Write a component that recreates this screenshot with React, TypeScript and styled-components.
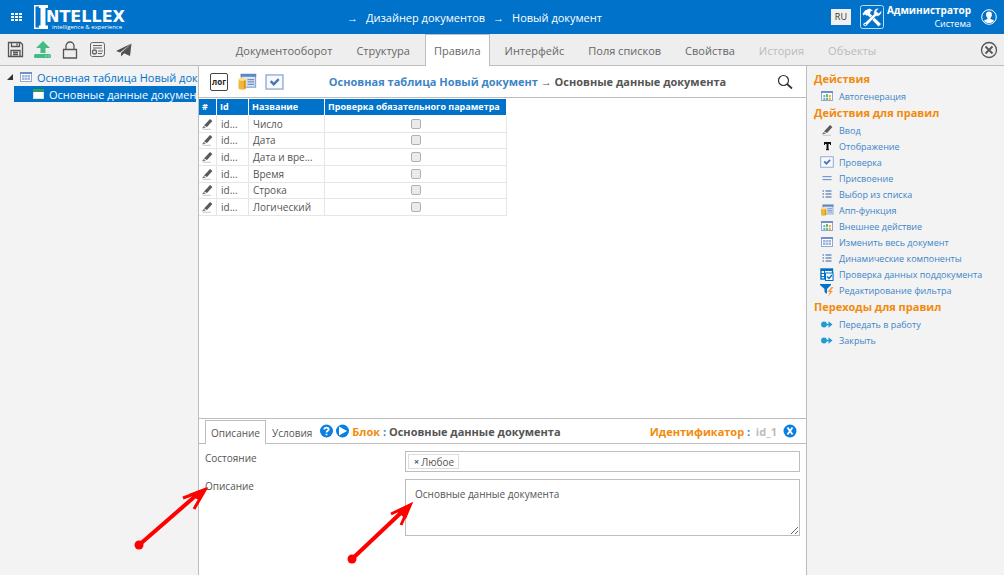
import React from 'react';
import styled, { createGlobalStyle, css } from 'styled-components';

const blue = '#0072c9';
const orange = '#f28a0c';
const link = '#3d85c6';
const line = '#bdbdbd';

const GlobalStyle = createGlobalStyle`
  * { box-sizing: border-box; }
  body { margin: 0; font-family: "Open Sans", "Noto Sans", sans-serif; font-size: 11px; color: #555; background: #fff; }
  button, input, textarea { font-family: inherit; }
  svg { display: block; flex: none; }
`;

const Page = styled.div`
  position: relative;
  display: flex;
  flex-direction: column;
  min-height: 100vh;
`;

const Header = styled.header`
  display: flex;
  align-items: center;
  height: 34px;
  padding: 0 7px 0 8px;
  background: ${blue};
  color: #fff;
`;

const IconButton = styled.button`
  display: flex;
  align-items: center;
  justify-content: center;
  padding: 0;
  border: 0;
  background: none;
  color: inherit;
  cursor: pointer;
`;

const Logo = styled.a`
  display: block;
  margin-left: 9px;
`;

const Crumbs = styled.nav`
  display: flex;
  flex: 1;
  justify-content: center;
  align-items: center;
  gap: 8px;
  padding-right: 9px;
  font-size: 11px;
  font-weight: 500;
  a { color: #fff; text-decoration: none; }
`;

const Lang = styled.button`
  width: 20px;
  height: 16px;
  padding: 0;
  border: 0;
  background: #f0f0f0;
  color: #333;
  font-size: 9px;
  line-height: 14px;
`;

const User = styled.div`
  min-width: 82px;
  margin: 0 10px 0 2px;
  text-align: right;
  font-size: 9px;
  line-height: 13px;
  white-space: nowrap;
  strong { display: block; font-size: 10px; }
`;

const Toolbar = styled.div`
  display: flex;
  height: 32px;
  padding: 0 6px 0 7px;
  background: #eee;
  border-bottom: 1px solid ${line};
`;

const Tools = styled.div`
  display: flex;
  align-items: center;
  gap: 9px;
  color: #555;
`;

const MainTabs = styled.nav`
  display: flex;
  flex: 1;
  justify-content: center;
  gap: 6px;
  margin-bottom: -1px;
`;

const MainTab = styled.button<{ $active?: boolean }>`
  padding: 0 8px;
  border: 1px solid transparent;
  border-bottom: 0;
  background: none;
  color: #666;
  font-size: 11px;
  white-space: nowrap;
  ${p => p.$active && css`background: #fff; border-color: ${line};`}
  &:disabled { color: #bbb; }
`;

const Body = styled.div`
  display: grid;
  grid-template-columns: 198px minmax(0, 1fr) 197px;
  flex: 1;
`;

const Tree = styled.aside`
  padding: 3px 2px 0 0;
  background: #f3f3f3;
`;

const TreeRow = styled.a<{ $selected?: boolean }>`
  display: flex;
  align-items: center;
  height: 16px;
  margin-bottom: 1px;
  padding-left: 5px;
  gap: 4px;
  white-space: nowrap;
  font-size: 11px;
  color: ${blue};
  text-decoration: none;
  ${p => p.$selected && css`margin-left: 14px; padding-left: 18px; background: ${blue}; color: #fff;`}
`;

const Center = styled.main`
  display: flex;
  flex-direction: column;
  background: #fff;
  border: solid ${line};
  border-width: 0 1px;
`;

const CenterBar = styled.div`
  display: flex;
  align-items: center;
  height: 32px;
  padding: 0 13px 0 10px;
  gap: 8px;
  border-bottom: 1px solid ${line};
`;

const Title = styled.h1`
  flex: 1;
  margin: 0;
  padding-right: 6px;
  text-align: center;
  font-size: 11px;
  font-weight: 700;
  a { color: ${link}; text-decoration: none; }
`;

const TableArea = styled.div`
  flex: 1;
  padding-top: 1px;
`;

const Grid = styled.table`
  table-layout: fixed;
  width: 308px;
  height: 117px;
  border-spacing: 0;
  font-size: 10px;
  line-height: 14px;
  th {
    height: 17px;
    padding: 0 3px;
    border-right: 1px solid #fff;
    border-bottom: 1px solid #fff;
    background: ${blue};
    color: #fff;
    font-size: 9px;
    font-weight: 700;
    text-align: left;
    white-space: nowrap;
  }
  td {
    height: 16px;
    padding: 0 4px;
    border-right: 1px solid #e6e6e6;
    border-bottom: 1px solid #e6e6e6;
    white-space: nowrap;
  }
  td:first-child { padding: 0 2px; }
`;

const Check = styled.input`
  display: block;
  appearance: none;
  width: 10px;
  height: 10px;
  margin: 0 auto;
  border: 1px solid #b0b0b0;
  border-radius: 2px;
  background: #ebebeb;
`;

const Details = styled.section`
  min-height: 157px;
  border-top: 1px solid ${line};
`;

const DetailsBar = styled.div`
  display: flex;
  align-items: center;
  height: 25px;
  padding: 0 9px 0 6px;
  border-bottom: 1px solid ${line};
`;

const SubTab = styled.button<{ $active?: boolean }>`
  align-self: flex-end;
  height: 24px;
  margin-bottom: -1px;
  padding: 0 5px;
  border: 1px solid transparent;
  border-bottom: 0;
  background: none;
  color: #555;
  font-size: 10px;
  ${p => p.$active && css`background: #fff; border-color: ${line};`}
`;

const BlockTitle = styled.h2`
  flex: 1;
  margin: 0 0 0 2px;
  font-size: 11px;
  font-weight: 700;
`;

const Ident = styled.div`
  margin-right: 6px;
  font-size: 11px;
  font-weight: 700;
  color: #bbb;
`;

const Key = styled.span`
  color: ${orange};
`;

const Colon = styled.span`
  color: #1c87dd;
`;

const Form = styled.div`
  display: grid;
  grid-template-columns: 200px minmax(0, 1fr);
  row-gap: 7px;
  padding: 7px 6px;
`;

const Label = styled.label`
  font-size: 10px;
  line-height: 14px;
`;

const TagBox = styled.div`
  display: flex;
  align-items: center;
  height: 21px;
  padding: 0 2px;
  border: 1px solid ${line};
  input { flex: 1; min-width: 0; border: 0; outline: 0; height: 14px; font-size: 10px; }
`;

const Tag = styled.span`
  display: flex;
  align-items: center;
  gap: 2px;
  height: 15px;
  padding: 0 4px 0 5px;
  border: 1px solid #ddd;
  font-size: 10px;
  button { font-size: 9px; font-weight: 700; }
`;

const Area = styled.textarea`
  display: block;
  width: 100%;
  height: 57px;
  padding: 7px 9px;
  border: 1px solid ${line};
  color: #555;
  font-size: 10px;
  line-height: 14px;
  outline: 0;
`;

const Actions = styled.aside`
  padding: 4px 0 0 7px;
  background: #f3f3f3;
`;

const ActionsHeading = styled.h3`
  margin: 0;
  font-size: 11px;
  line-height: 18px;
  font-weight: 700;
  color: ${orange};
`;

const Action = styled.a`
  display: flex;
  align-items: center;
  height: 16px;
  gap: 5px;
  padding-left: 6px;
  font-size: 9px;
  color: ${link};
  text-decoration: none;
  white-space: nowrap;
`;

const Notes = styled.svg`
  position: absolute;
  left: 130px;
  top: 480px;
  pointer-events: none;
`;

type IconProps = { size?: number };

const PencilIcon = ({ size = 12 }: IconProps) => (
  <svg width={size} height={size} viewBox="0 0 12 12">
    <path d="M9 1 11.400 3 6 9 3 7.500z" fill="#5a5a5a" />
    <path d="M2.600 8 5 9.600 1 10.600z" fill="#777" />
    <path d="M2 11.300h8" stroke="#c8c8c8" />
  </svg>
);

const WindowFrame = ({ children }: { children?: React.ReactNode }) => (
  <svg width="14" height="12" viewBox="0 0 14 12">
    <rect x="1.500" y="1.500" width="11" height="9" fill="#fff" stroke="#8fa9d3" />
    <path d="M1 2h12" stroke="#6f90c8" strokeWidth="2" />
    {children}
  </svg>
);

const SheetIcon = () => (
  <WindowFrame>
    <rect x="3" y="4" width="8" height="5" fill="#9fb5dc" />
    <path d="M3 6.500h8M5.700 4v5M8.300 4v5" stroke="#e6ecf7" strokeWidth="0.700" />
  </WindowFrame>
);

const AutoIcon = () => (
  <WindowFrame>
    <path d="M4.300 5v5" stroke="#5fb4e0" strokeWidth="2" />
    <path d="M7 4v6" stroke="#6dbb6d" strokeWidth="2" />
    <path d="M9.800 5v5" stroke="#efa83c" strokeWidth="2" />
    <path d="M3 7.500h8" stroke="#fff" strokeWidth="0.700" />
  </WindowFrame>
);

const AppIcon = ({ size = 12 }: IconProps) => (
  <svg width={Math.round(size * 7 / 6)} height={size} viewBox="0 0 20 18">
    <rect x="4" y="1.500" width="15" height="13.500" fill="#dde6f5" stroke="#8fa9d3" strokeWidth="1.400" />
    <path d="M3.300 2.500h16.400" stroke="#5f86c4" strokeWidth="3" />
    <path d="M10.500 7h7M10.500 9.500h7M10.500 12h7" stroke="#6f90c8" strokeWidth="1.300" />
    <path d="M1 6.500v9.500a3.500 1.500 0 0 0 8 0V6.500z" fill="#eeb83a" />
    <ellipse cx="5" cy="6.500" rx="4" ry="1.600" fill="#ffe08a" />
    <path d="M7.500 8v8.500" stroke="#d29612" strokeWidth="1.500" />
  </svg>
);

const CheckIcon = ({ size = 12 }: IconProps) => (
  <svg width={Math.round(size * 7 / 6)} height={size} viewBox="0 0 20 17">
    <rect x="1" y="1" width="18" height="15" fill="#f7f9fd" stroke="#8fa9d3" strokeWidth="1.400" />
    <path d="m6 7.500 3.200 3.400L14.500 5.500" fill="none" stroke="#4a74b8" strokeWidth="2.600" />
  </svg>
);

const LetterIcon = () => (
  <svg width="14" height="12" viewBox="0 0 14 12">
    <path d="M4 3h7M7.500 3v7" stroke="#111" strokeWidth="2" />
    <path d="M4.500 3v2M10.500 3v2M6 9.700h3" stroke="#111" />
  </svg>
);

const EqualIcon = () => (
  <svg width="14" height="12" viewBox="0 0 14 12">
    <path d="M2.500 4.500h9M2.500 7.500h9" stroke="#6f8fc6" />
    <path d="M2.500 5.300h9M2.500 8.300h9" stroke="#c3d0e8" strokeWidth="0.600" />
  </svg>
);

const ListIcon = () => (
  <svg width="14" height="12" viewBox="0 0 14 12">
    <path d="M2.500 3h1.500M2.500 6h1.500M2.500 9h1.500M5.500 3h6M5.500 6h6M5.500 9h6" stroke="#6f90c8" strokeWidth="1.500" />
  </svg>
);

const SubdocIcon = () => (
  <svg width="14" height="13" viewBox="0 0 14 13">
    <rect x="1" y="1" width="11.500" height="10" fill="#fff" stroke={blue} strokeWidth="1.400" />
    <path d="M1 2h12" stroke={blue} strokeWidth="2" />
    <path d="M1 5.500h12M1 8.500h4M4.500 2v9" stroke={blue} />
    <rect x="5.500" y="5" width="7.500" height="7.500" fill="#fff" stroke={blue} />
    <path d="m7 8.500 2 2 3-3.500" fill="none" stroke={blue} strokeWidth="1.400" />
  </svg>
);

const FilterIcon = () => (
  <svg width="14" height="14" viewBox="0 0 14 14">
    <path d="M0 1h11v1L7 6v5L4.500 9V6L0 2z" fill={blue} />
    <path d="m11.500 4-4 5H10l-2 4.500 5-5.500h-2.500L13.500 4z" fill="#f59a4a" />
  </svg>
);

const MoveIcon = () => (
  <svg width="14" height="12" viewBox="0 0 14 12">
    <circle cx="4" cy="6.500" r="2.900" fill="#1e9ad6" />
    <path d="M6 6.500h4" stroke="#1e9ad6" strokeWidth="1.400" />
    <path d="M8.500 3.300v6.400l4-3.200z" fill="#1e9ad6" />
  </svg>
);

const SearchIcon = () => (
  <svg width="16" height="16" viewBox="0 0 16 16" fill="none" stroke="#333">
    <circle cx="6.500" cy="6.500" r="5" strokeWidth="1.200" />
    <path d="m10 10 5 4.500" strokeWidth="1.700" />
  </svg>
);

const ruleActions: [React.ReactNode, string][] = [
  [<PencilIcon />, 'Ввод'],
  [<LetterIcon />, 'Отображение'],
  [<CheckIcon />, 'Проверка'],
  [<EqualIcon />, 'Присвоение'],
  [<ListIcon />, 'Выбор из списка'],
  [<AppIcon />, 'Апп-функция'],
  [<AutoIcon />, 'Внешнее действие'],
  [<SheetIcon />, 'Изменить весь документ'],
  [<ListIcon />, 'Динамические компоненты'],
  [<SubdocIcon />, 'Проверка данных поддокумента'],
  [<FilterIcon />, 'Редактирование фильтра'],
];

const IconSlot = styled.span`
  display: flex;
  justify-content: center;
  width: 14px;
`;

const ActionLink = ({ icon, text }: { icon: React.ReactNode; text: string }) => (
  <Action href="#"><IconSlot>{icon}</IconSlot>{text}</Action>
);

const fields = ['Число', 'Дата', 'Дата и вре...', 'Время', 'Строка', 'Логический'];
const tabs = ['Документооборот', 'Структура', 'Правила', 'Интерфейс', 'Поля списков', 'Свойства', 'История', 'Объекты'];

export default function App() {
  return (
    <Page>
      <GlobalStyle />
      <Header>
        <IconButton aria-label="Меню">
          <svg width="17" height="16" viewBox="0 0 17 16" fill="#fff">
            {[4, 7, 10].map(y => [3, 7, 11].map(x => <rect key={`${x}-${y}`} x={x} y={y} width="3" height="2" />))}
          </svg>
        </IconButton>
        <Logo href="#" aria-label="Intellex">
          <svg width="93" height="28" viewBox="0 0 93 28" fill="#fff">
            <path d="M0 2h4v1.500H1.500v21H4V26H0z" />
            <path d="M4 2h10v3h-2.500v17.500H14V26H4v-3.500h2.500V5H4z" />
            <path d="M4.500 3v22" stroke={blue} strokeWidth="0.800" />
            <text x="12" y="19" fontSize="16" fontWeight="700" fontFamily="DejaVu Sans, sans-serif">NTELLEX</text>
            <text x="18" y="26" fontSize="6">intelligence &amp; experience</text>
          </svg>
        </Logo>
        <Crumbs>
          <span>→</span><a href="#">Дизайнер документов</a><span>→</span><a href="#">Новый документ</a>
        </Crumbs>
        <Lang>RU</Lang>
        <IconButton aria-label="Настройки">
          <svg width="34" height="26" viewBox="-9 0 34 26" fill="#fff">
            <rect x="0.500" y="1.500" width="23" height="23" rx="2" fill="none" stroke="#b9dcf5" />
            <path d="M2.500 10 5 6.500 9.500 4.500 13 6.500 10.800 7.300 10 9.500 21 20 18.500 22.500 8 11.500 6.200 11.500 5 10.200 3.700 11.500z" />
            <path d="M14 10C13 7 15.500 3.800 19 4.300L16.500 7.200l2 2L21.600 6.600C22.200 10 19 13 16 12L7.500 20.800C6.500 23 3.500 22.500 3 20.800 3 19.200 4 18.300 5.300 18.400z" stroke={blue} strokeWidth="0.500" />
            <circle cx="5.200" cy="20.500" r="0.800" fill={blue} />
          </svg>
        </IconButton>
        <User><strong>Администратор</strong>Система</User>
        <IconButton aria-label="Профиль">
          <svg width="16" height="16" viewBox="0 0 16 16">
            <circle cx="8" cy="8" r="7.300" fill="none" stroke="#fff" />
            <path d="M8 2.500c4 0 3.300 5 1.500 6.500v1c1.500.5 3 1 3.500 2-2.500 2.800-7.500 2.800-10 0 .5-1 2-1.500 3.500-2V9C4.700 7.500 4 2.500 8 2.500z" fill="#fff" />
          </svg>
        </IconButton>
      </Header>

      <Toolbar>
        <Tools>
          <IconButton aria-label="Сохранить">
            <svg width="17" height="17" viewBox="0 0 17 17" fill="none" stroke="#555" strokeWidth="1.300">
              <path d="M1.500 1.500h12l2 2v12h-14zM4.500 1.500v4h8v-4M10 2.500v2M4 15.500v-6h9v6M6 11.500h5M6 13.500h5" />
            </svg>
          </IconButton>
          <IconButton aria-label="Загрузить">
            <svg width="20" height="18" viewBox="0 0 20 18" fill="#43bb82">
              <path d="M10 0 17 7h-4.500v5h-5V7H3z" />
              <rect x="1" y="13" width="17" height="4" rx="1.500" />
              <path d="M12.500 15h1M15.500 15h1" stroke="#fff" />
            </svg>
          </IconButton>
          <IconButton aria-label="Заблокировать">
            <svg width="16" height="18" viewBox="0 0 16 18" fill="none" stroke="#555" strokeWidth="1.300">
              <path d="M1.500 8.500h13v8.500h-13zM4 8.500V5a4 4 0 0 1 8 0v3.500" />
            </svg>
          </IconButton>
          <IconButton aria-label="Журнал">
            <svg width="20" height="17" viewBox="0 0 20 17" fill="none" stroke="#666">
              <path d="M3.500 11V3a2 2 0 0 1 2-1.500h10a2 2 0 0 1 2 2V13a2.500 2.500 0 0 1-2.500 2.500H5.500A2 2 0 0 1 3.500 13zM6 4.500h9M6 7h9M11 10h5M11 12.500h4" />
              <circle cx="7.500" cy="11" r="2" strokeWidth="1.300" />
            </svg>
          </IconButton>
          <IconButton aria-label="Отправить">
            <svg width="16" height="16" viewBox="0 0 16 16" fill="#505050">
              <path d="M15.500 1.500 0 9l4 1.500z" />
              <path d="M15.500 1.500 5 11v3.500l2.500-2.500z" />
              <path d="M15.500 1.500 7.500 11l6.500 3z" />
            </svg>
          </IconButton>
        </Tools>
        <MainTabs>
          {tabs.map((t, i) => <MainTab key={t} $active={i === 2} disabled={i > 5}>{t}</MainTab>)}
        </MainTabs>
        <IconButton aria-label="Закрыть">
          <svg width="18" height="18" viewBox="0 0 18 18" fill="none" stroke="#555" strokeWidth="1.300">
            <circle cx="9" cy="9" r="7.500" />
            <path d="m5.500 5.500 7 7M12.500 5.500l-7 7" strokeWidth="1.800" />
          </svg>
        </IconButton>
      </Toolbar>

      <Body>
        <Tree>
          <TreeRow href="#">
            <svg width="10" height="8" viewBox="0 0 10 8"><path d="M8 1v6H2z" fill="#333" /></svg>
            <SheetIcon />Основная таблица Новый док
          </TreeRow>
          <TreeRow href="#" $selected>
            <svg width="13" height="12" viewBox="0 0 13 12">
              <rect x="1.500" y="1.500" width="10" height="9" fill="#fff" stroke="#d8e8d8" />
              <path d="M1 2.500h11" stroke="#2f9e57" strokeWidth="3" />
            </svg>
            Основные данные докумен
          </TreeRow>
        </Tree>

        <Center>
          <CenterBar>
            <IconButton aria-label="Лог">
              <svg width="20" height="20" viewBox="0 0 20 20">
                <rect x="1.500" y="1.500" width="17" height="17" rx="1.500" fill="#fff" stroke="#444" />
                <text x="10" y="13" textAnchor="middle" fontSize="8" fontWeight="700" fill="#222">лог</text>
              </svg>
            </IconButton>
            <IconButton aria-label="Апп-функция"><AppIcon size={17} /></IconButton>
            <IconButton aria-label="Проверка"><CheckIcon size={16} /></IconButton>
            <Title><a href="#">Основная таблица Новый документ</a> → Основные данные документа</Title>
            <IconButton aria-label="Поиск"><SearchIcon /></IconButton>
          </CenterBar>

          <TableArea>
            <Grid>
              <colgroup>
                <col width="18" /><col width="32" /><col width="76" /><col width="182" />
              </colgroup>
              <thead>
                <tr><th>#</th><th>Id</th><th>Название</th><th>Проверка обязательного параметра</th></tr>
              </thead>
              <tbody>
                {fields.map(f => (
                  <tr key={f}>
                    <td><PencilIcon /></td>
                    <td>id...</td>
                    <td>{f}</td>
                    <td><Check type="checkbox" aria-label={f} /></td>
                  </tr>
                ))}
              </tbody>
            </Grid>
          </TableArea>

          <Details>
            <DetailsBar>
              <SubTab $active>Описание</SubTab>
              <SubTab>Условия</SubTab>
              <IconButton aria-label="Справка">
                <svg width="16" height="16" viewBox="0 0 16 16">
                  <circle cx="8.500" cy="8" r="6.500" fill="#0a7fe0" />
                  <path d="M6.300 6.500C6.300 3.800 10.800 4 10.700 6.300 10.700 7.800 8.500 7.800 8.500 9.500M8.500 10.800v1.500" fill="none" stroke="#fff" strokeWidth="1.800" />
                </svg>
              </IconButton>
              <IconButton aria-label="Запустить">
                <svg width="16" height="16" viewBox="0 0 16 16">
                  <circle cx="8.500" cy="8" r="6.500" fill="#0a7fe0" />
                  <path d="M5 3.500v9L13 8z" fill="#fff" />
                </svg>
              </IconButton>
              <BlockTitle><Key>Блок</Key> <Colon>:</Colon> Основные данные документа</BlockTitle>
              <Ident><Key>Идентификатор</Key> <Colon>:</Colon>&nbsp; id_1</Ident>
              <IconButton aria-label="Закрыть блок">
                <svg width="14" height="14" viewBox="0 0 14 14">
                  <circle cx="7" cy="7" r="6.500" fill="#0a7fe0" />
                  <path d="m4.500 3.500 5 7M9.500 3.500l-5 7" stroke="#fff" strokeWidth="1.900" />
                </svg>
              </IconButton>
            </DetailsBar>
            <Form>
              <Label htmlFor="state">Состояние</Label>
              <TagBox>
                <Tag><IconButton aria-label="Убрать">×</IconButton>Любое</Tag>
                <input id="state" />
              </TagBox>
              <Label htmlFor="descr">Описание</Label>
              <Area id="descr" defaultValue="Основные данные документа" />
            </Form>
          </Details>
        </Center>

        <Actions>
          <ActionsHeading>Действия</ActionsHeading>
          <ActionLink icon={<AutoIcon />} text="Автогенерация" />
          <ActionsHeading>Действия для правил</ActionsHeading>
          {ruleActions.map(([icon, text]) => <ActionLink key={text} icon={icon} text={text} />)}
          <ActionsHeading>Переходы для правил</ActionsHeading>
          <ActionLink icon={<MoveIcon />} text="Передать в работу" />
          <ActionLink icon={<MoveIcon />} text="Закрыть" />
        </Actions>
      </Body>

      <Notes width="290" height="90" viewBox="130 480 290 90" fill="none" stroke="#f00" strokeWidth="4">
        <path d="M139 545 200 492M352 559 406 508" />
        <circle cx="139" cy="545" r="4.500" fill="#f00" stroke="none" />
        <circle cx="352" cy="559" r="4.500" fill="#f00" stroke="none" />
        <path d="m183 498 22-8-11 19M391 514l19-9-9 20" strokeWidth="3" />
        <path d="m207 487-18 7 11 7zM413 502l-17 9 10 8z" fill="#f00" stroke="none" />
      </Notes>
    </Page>
  );
}
